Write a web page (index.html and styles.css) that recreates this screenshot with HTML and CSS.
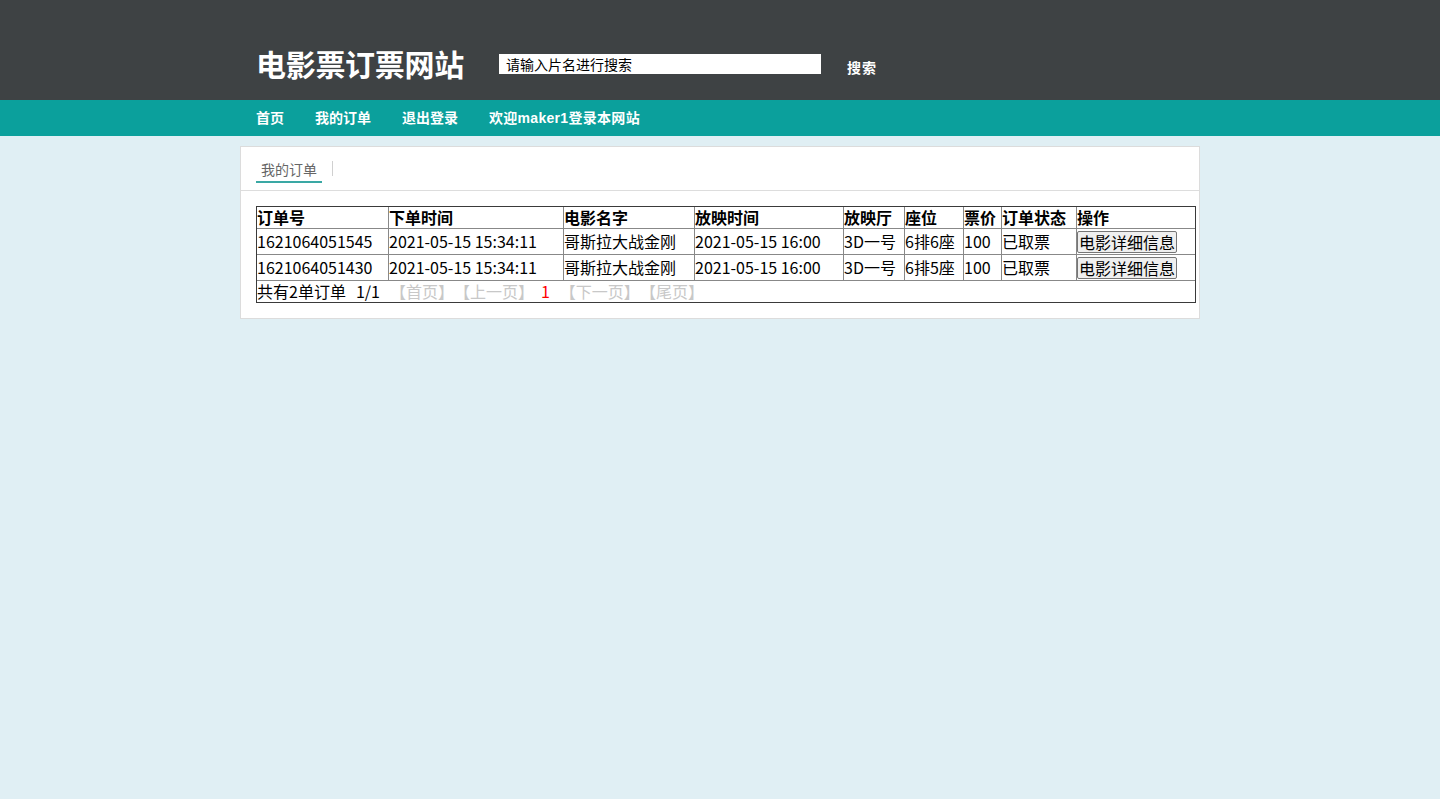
FILE: index.html
```html
<!DOCTYPE html>
<html lang="zh-CN">
<head>
<meta charset="utf-8">
<title>电影票订票网站</title>
<link rel="stylesheet" href="styles.css">
</head>
<body>
<header class="topbar">
  <div class="wrap top-inner">
    <h1 class="logo">电影票订票网站</h1>
    <input class="search-input" type="text" value="请输入片名进行搜索">
    <button class="search-btn" type="button">搜索</button>
  </div>
</header>
<nav class="navbar">
  <div class="wrap nav-inner">
    <a class="nav-item" href="#">首页</a>
    <a class="nav-item" href="#">我的订单</a>
    <a class="nav-item" href="#">退出登录</a>
    <span class="nav-item">欢迎maker1登录本网站</span>
  </div>
</nav>
<main class="panel">
  <div class="tabs">
    <span class="tab">我的订单</span>
    <span class="tab-sep"></span>
  </div>
  <div class="panel-body">
    <table class="orders">
      <colgroup>
        <col class="c1"><col class="c2"><col class="c3"><col class="c4"><col class="c5"><col class="c6"><col class="c7"><col class="c8"><col class="c9">
      </colgroup>
      <thead>
        <tr>
          <th>订单号</th><th>下单时间</th><th>电影名字</th><th>放映时间</th><th>放映厅</th><th>座位</th><th>票价</th><th>订单状态</th><th>操作</th>
        </tr>
      </thead>
      <tbody>
        <tr>
          <td>1621064051545</td><td>2021-05-15 15:34:11</td><td>哥斯拉大战金刚</td><td>2021-05-15 16:00</td><td>3D一号</td><td>6排6座</td><td>100</td><td>已取票</td><td><button class="detail-btn" type="button">电影详细信息</button></td>
        </tr>
        <tr>
          <td>1621064051430</td><td>2021-05-15 15:34:11</td><td>哥斯拉大战金刚</td><td>2021-05-15 16:00</td><td>3D一号</td><td>6排5座</td><td>100</td><td>已取票</td><td><button class="detail-btn" type="button">电影详细信息</button></td>
        </tr>
        <tr class="foot-row">
          <td colspan="9"><span>共有2单订单</span><span class="pg-count">1/1</span><span class="pg-link pg-first">【首页】</span><span class="pg-link pg-prev">【上一页】</span><span class="pg-cur">1</span><span class="pg-link pg-next">【下一页】</span><span class="pg-link">【尾页】</span></td>
        </tr>
      </tbody>
    </table>
  </div>
</main>
</body>
</html>
```
FILE: styles.css
```css
html, body {
  margin: 0;
  padding: 0;
}
body {
  background: #e0eff4;
  font-family: "Noto Sans CJK SC", "Liberation Sans", sans-serif;
  color: #000;
  min-height: 799px;
  text-spacing-trim: space-all;
}
.wrap {
  width: 960px;
  margin: 0 auto;
  padding: 0 16px;
  box-sizing: border-box;
}
.topbar {
  background: #3e4244;
  height: 100px;
}
.top-inner {
  display: flex;
  align-items: flex-start;
  padding-top: 48px;
}
.logo {
  margin: 0;
  font-size: 30px;
  line-height: 30px;
  font-weight: bold;
  color: #fff;
  font-family: "Noto Sans CJK SC", sans-serif;
  letter-spacing: -0.3px;
}
.search-input {
  margin: 6px 0 0 35px;
  width: 322px;
  height: 20px;
  box-sizing: border-box;
  border: none;
  outline: none;
  padding: 0 0 0 7px;
  font-family: "Noto Sans CJK SC", sans-serif;
  font-size: 14px;
  line-height: 20px;
  color: #000;
  background: #fff;
}
.search-btn {
  margin: 12px 0 0 26px;
  padding: 0;
  border: none;
  background: none;
  color: #fff;
  font-family: "Noto Sans CJK SC", sans-serif;
  font-size: 14px;
  line-height: 14px;
  font-weight: bold;
  letter-spacing: 1px;
}
.navbar {
  background: #0ba09c;
  height: 36px;
}
.nav-inner {
  display: flex;
  align-items: center;
  height: 36px;
  gap: 31px;
}
.nav-item {
  color: #fff;
  text-decoration: none;
  font-size: 14px;
  font-weight: bold;
  font-family: "Liberation Sans", "Noto Sans CJK SC", sans-serif;
  line-height: 20px;
}
.nav-item:last-child {
  letter-spacing: 0.3px;
}
.panel {
  display: block;
  width: 960px;
  margin: 10px auto 0;
  background: #fff;
  border: 1px solid #dcdcdc;
  box-sizing: border-box;
}
.tabs {
  display: flex;
  align-items: flex-start;
  height: 44px;
  box-sizing: border-box;
  padding: 12px 15px 0;
  border-bottom: 1px solid #dddddd;
}
.tab {
  font-size: 14px;
  line-height: 20px;
  color: #666;
  padding: 0 5px 2px;
  border-bottom: 2px solid #3aa8a4;
}
.tab-sep {
  width: 1px;
  height: 15px;
  background: #d0d0d0;
  margin: 2px 0 0 10px;
}
.panel-body {
  padding: 15px;
}
.orders {
  width: 940px;
  table-layout: fixed;
  border-collapse: separate;
  border-spacing: 0;
  border: 1px solid #3a3a3a;
  font-size: 16px;
}
.c1 { width: 132px; }
.c2 { width: 175px; }
.c3 { width: 131px; }
.c4 { width: 149px; }
.c5 { width: 61px; }
.c6 { width: 59px; }
.c7 { width: 38px; }
.c8 { width: 75px; }
.c9 { width: 118px; }
.orders th,
.orders td {
  padding: 0;
  text-align: left;
  vertical-align: middle;
  white-space: nowrap;
  line-height: 21px;
  border-right: 1px solid #888;
  border-bottom: 1px solid #888;
}
.orders th {
  font-weight: bold;
  height: 21px;
}
.orders th:last-child,
.orders td:last-child {
  border-right: none;
}
.orders tbody tr td {
  height: 25px;
}
.orders tbody tr.foot-row td {
  height: 21px;
  border-bottom: none;
}
.detail-btn {
  font-family: "Noto Sans CJK SC", sans-serif;
  font-size: 16px;
  line-height: 18px;
  padding: 1px 1px;
  margin: 0;
  height: 22px;
  box-sizing: border-box;
  border: 1px solid #767676;
  border-radius: 2px;
  background: #efefef;
  color: #000;
  vertical-align: middle;
}
.pg-count { margin-left: 10px; }
.pg-link { color: #c8c8c8; }
.pg-first { margin-left: 10px; }
.pg-prev { margin-left: 0; }
.pg-cur { color: #ff0000; margin-left: 7px; }
.pg-next { margin-left: 10px; }
```
